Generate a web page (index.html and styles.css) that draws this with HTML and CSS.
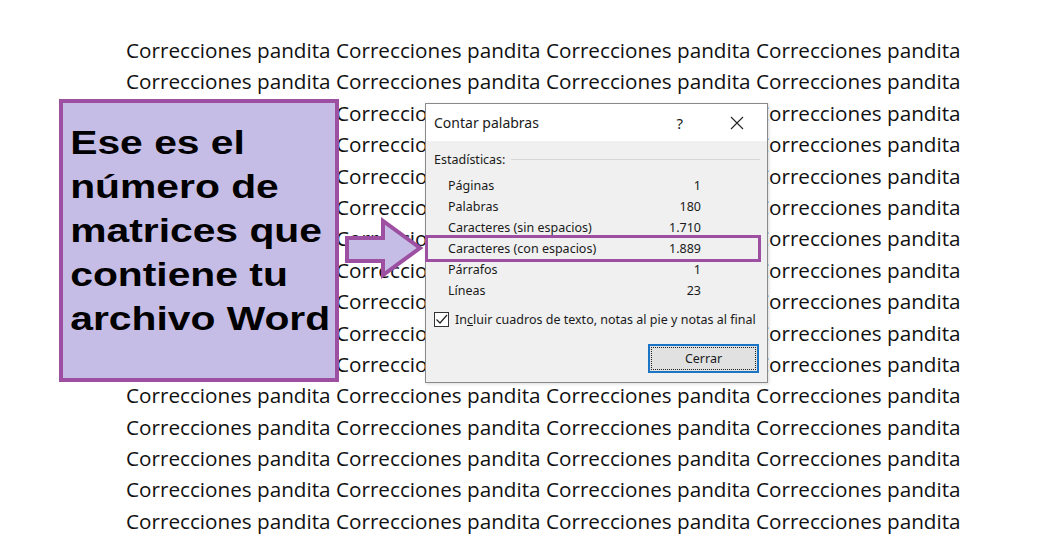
FILE: index.html
```html
<!DOCTYPE html>
<html>
<head>
    <title>Contar palabras</title>
    <link rel="stylesheet" href="styles.css">
</head>
<body>
    <div class="document" id="document">
    </div>

    <div class="callout">
        <div class="callout-text">Ese es el<br>número de<br>matrices que<br>contiene tu<br>archivo Word</div>
    </div>

    <svg class="arrow" width="82" height="62" viewBox="0 0 82 62">
        <polygon points="4,21 40,21 40,4 77,31 40,58 40,44 4,44" fill="#c6bde6" stroke="#9d4fa1" stroke-width="4" stroke-linejoin="miter"/>
    </svg>

    <div class="dialog">
        <div class="dialog-title">
            <span class="title-text">Contar palabras</span>
            <span class="title-help">?</span>
            <svg class="title-close" width="14" height="14" viewBox="0 0 14 14">
                <path d="M1 1 L13 13 M13 1 L1 13" stroke="#222" stroke-width="1.1" fill="none"/>
            </svg>
        </div>
        <div class="dialog-body">
            <div class="group-label">
                <span>Estadísticas:</span>
                <span class="group-line"></span>
            </div>
            <div class="stats">
                <div class="stat"><span>Páginas</span><span>1</span></div>
                <div class="stat"><span>Palabras</span><span>180</span></div>
                <div class="stat"><span>Caracteres (sin espacios)</span><span>1.710</span></div>
                <div class="stat"><span>Caracteres (con espacios)</span><span>1.889</span></div>
                <div class="stat"><span>Párrafos</span><span>1</span></div>
                <div class="stat"><span>Líneas</span><span>23</span></div>
            </div>
            <div class="check-row">
                <span class="checkbox">
                    <svg width="13" height="13" viewBox="0 0 13 13">
                        <path d="M1.5 6.5 L5 10 L12 2" stroke="#222" stroke-width="1.2" fill="none"/>
                    </svg>
                </span>
                <span>In<u>c</u>luir cuadros de texto, notas al pie y notas al final</span>
            </div>
            <div class="button-row">
                <div class="button"><span class="button-inner">Cerrar</span></div>
            </div>
        </div>
        <div class="highlight"></div>
    </div>

    <script>
        // fill the page with the repeated sample text
        const doc = document.getElementById('document');
        let html = '';
        for (let i = 0; i < 16; i++) {
            html += '<div class="line">Correcciones pandita Correcciones pandita Correcciones pandita Correcciones pandita</div>';
        }
        doc.innerHTML = html;
    </script>
</body>
</html>
```

FILE: styles.css
```css
body {
    margin: 0;
    padding: 0;
    background-color: #fff;
    width: 1041px;
    height: 537px;
    overflow: hidden;
    position: relative;
}
.document {
    padding: 35px 0 0 126px;
    font-family: "Open Sans", sans-serif;
    font-size: 20.7px;
    color: #111;
}
.line {
    height: 31.4px;
    line-height: 31.4px;
    white-space: nowrap;
}
.callout {
    position: absolute;
    left: 59px;
    top: 99px;
    width: 272px;
    height: 275px;
    border: 4px solid #9d4fa1;
    background-color: #c6bde6;
}
.callout-text {
    font-family: "Liberation Sans", Arial, sans-serif;
    font-weight: bold;
    font-size: 34px;
    line-height: 44px;
    color: #000;
    white-space: nowrap;
    padding: 17px 0 0 6px;
    transform: scaleX(1.2);
    transform-origin: left top;
}
.arrow {
    position: absolute;
    left: 343px;
    top: 217px;
}
.dialog {
    position: absolute;
    left: 425px;
    top: 103px;
    width: 341px;
    height: 278px;
    border: 1px solid #8a8a8a;
    background-color: #f0f0f0;
    font-family: "Noto Sans", sans-serif;
    color: #1a1a1a;
    box-shadow: 1px 1px 3px rgba(0, 0, 0, 0.15);
}
.dialog-title {
    height: 37px;
    background-color: #fff;
    display: flex;
    align-items: center;
    padding-left: 8px;
}
.title-text {
    font-size: 14px;
    flex: 1;
}
.title-help {
    font-size: 15px;
    margin-right: 47px;
}
.title-close {
    margin-right: 23px;
}
.dialog-body {
    padding: 7px 7px 0 8px;
    font-size: 12.5px;
}
.group-label {
    display: flex;
    align-items: center;
    height: 22px;
}
.group-line {
    flex: 1;
    height: 1px;
    background-color: #d6d6d6;
    margin-left: 6px;
}
.stats {
    padding: 5px 0 0 14px;
    width: 253px;
}
.stat {
    display: flex;
    justify-content: space-between;
    height: 21px;
    line-height: 21px;
}
.check-row {
    display: flex;
    align-items: center;
    margin-top: 8px;
    height: 20px;
}
.checkbox {
    width: 13px;
    height: 13px;
    border: 1px solid #333;
    background-color: #fff;
    margin-right: 6px;
    display: flex;
}
.check-row u {
    text-decoration-thickness: 1px;
}
.button-row {
    display: flex;
    justify-content: flex-end;
    margin-top: 15px;
    padding-right: 1px;
}
.button {
    width: 105px;
    height: 23px;
    border: 2px solid #1b74c4;
    background-color: #e1e1e1;
    padding: 1px;
    box-sizing: content-box;
}
.button-inner {
    display: block;
    height: 21px;
    border: 1px dotted #222;
    text-align: center;
    line-height: 21px;
    font-size: 12.5px;
}
.highlight {
    position: absolute;
    left: -1px;
    top: 131px;
    width: 330px;
    height: 21px;
    border: 3px solid #9d4fa1;
}
```
